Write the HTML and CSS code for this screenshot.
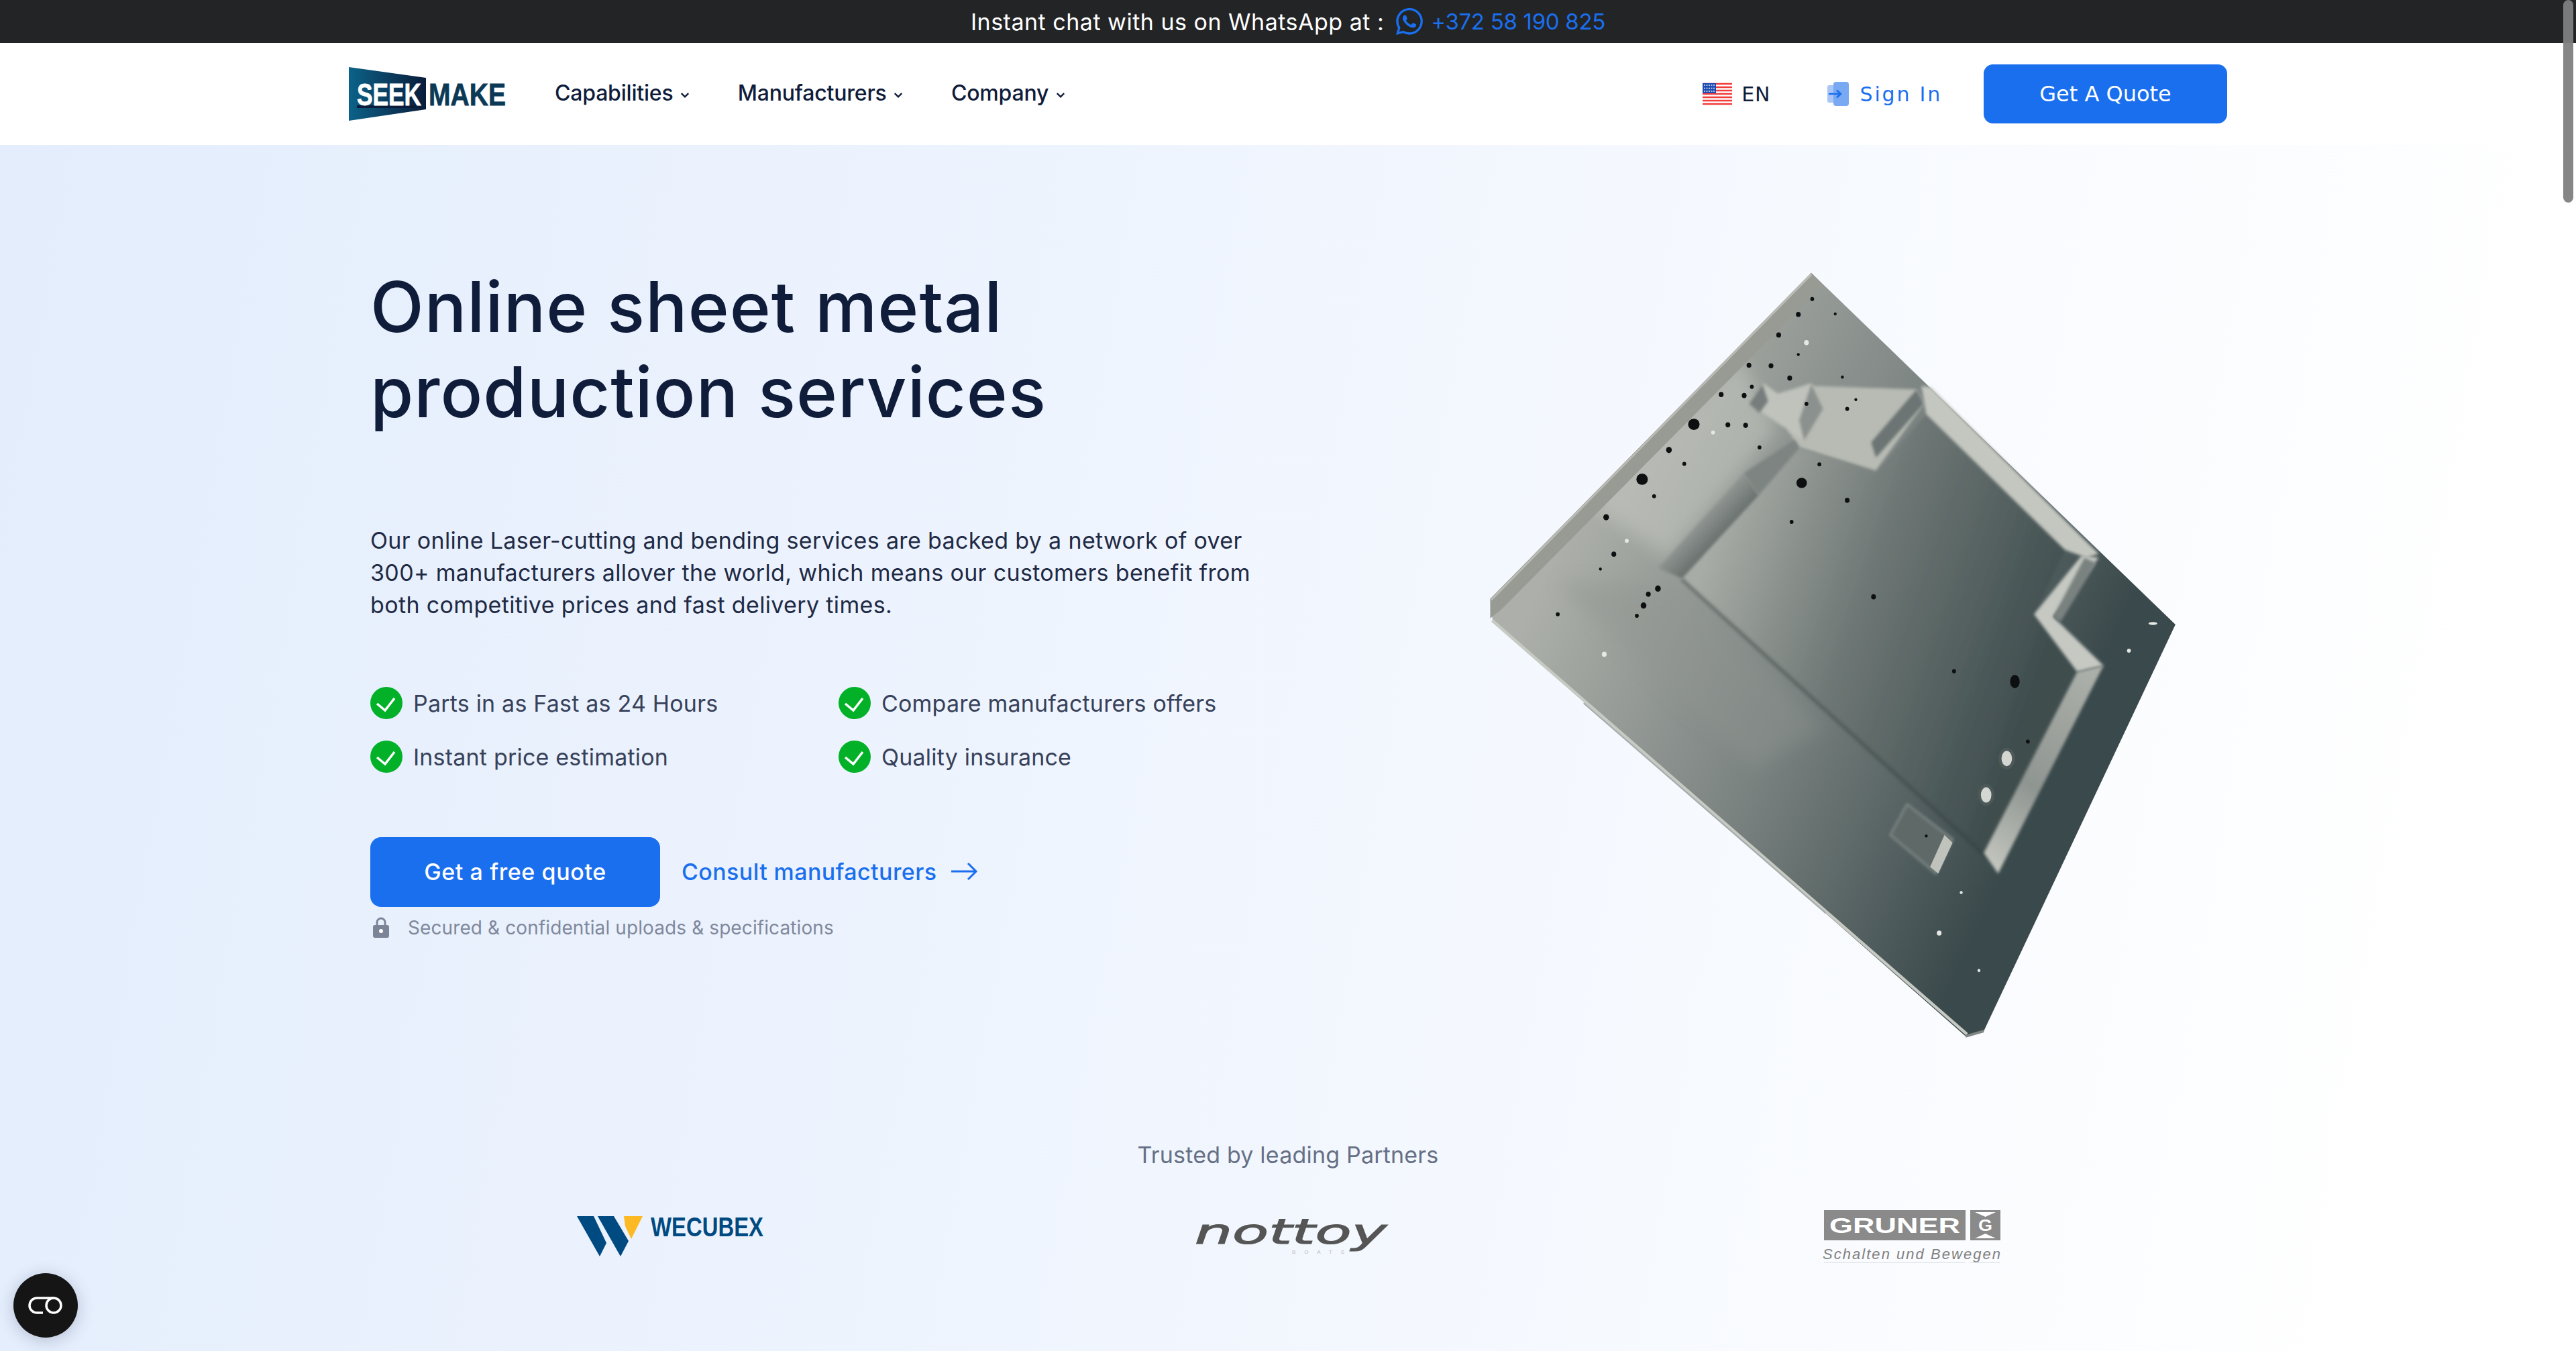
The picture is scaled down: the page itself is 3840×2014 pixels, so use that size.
FILE: index.html
```html
<!DOCTYPE html>
<html lang="en">
<head>
  <meta charset="UTF-8" />
  <meta name="viewport" content="width=device-width, initial-scale=1.0" />
  <title>SeekMake</title>
  <link rel="stylesheet" href="styles.css">
</head>
<body>
  <div class="topbar">
    <span class="topbar-label">Instant chat with us on WhatsApp at :</span>
    <svg class="wa-icon" viewBox="0 0 24 24"><path fill="#1a6fef" d="M17.472 14.382c-.297-.149-1.758-.867-2.03-.967-.273-.099-.471-.148-.67.15-.197.297-.767.966-.94 1.164-.173.199-.347.223-.644.075-.297-.15-1.255-.463-2.39-1.475-.883-.788-1.48-1.761-1.653-2.059-.173-.297-.018-.458.13-.606.134-.133.298-.347.446-.52.149-.174.198-.298.298-.497.099-.198.05-.371-.025-.52-.075-.149-.669-1.612-.916-2.207-.242-.579-.487-.5-.669-.51-.173-.008-.371-.01-.57-.01-.198 0-.52.074-.792.372-.272.297-1.04 1.016-1.04 2.479 0 1.462 1.065 2.875 1.213 3.074.149.198 2.096 3.2 5.077 4.487.709.306 1.262.489 1.694.625.712.227 1.36.195 1.871.118.571-.085 1.758-.719 2.006-1.413.248-.694.248-1.289.173-1.413-.074-.124-.272-.198-.57-.347m-5.421 7.403h-.004a9.87 9.87 0 01-5.031-1.378l-.361-.214-3.741.982.998-3.648-.235-.374a9.86 9.86 0 01-1.51-5.26c.001-5.45 4.436-9.884 9.888-9.884 2.64 0 5.122 1.03 6.988 2.898a9.825 9.825 0 012.893 6.994c-.003 5.45-4.437 9.884-9.885 9.884m8.413-18.297A11.815 11.815 0 0012.05 0C5.495 0 .16 5.335.157 11.892c0 2.096.547 4.142 1.588 5.945L.057 24l6.305-1.654a11.882 11.882 0 005.683 1.448h.005c6.554 0 11.89-5.335 11.893-11.893a11.821 11.821 0 00-3.48-8.413z"/></svg>
    <a class="wa-number" href="#">+372 58 190 825</a>
  </div>

  <header class="header">
    <div class="header-inner">
      <svg class="logo" viewBox="0 0 234 80">
        <defs>
          <linearGradient id="logo-bg" x1="0" x2="1" y1="0" y2="0">
            <stop offset="0" stop-color="#0b6288"/>
            <stop offset="1" stop-color="#0a1c3a"/>
          </linearGradient>
        </defs>
        <polygon points="0,0 115,16 115,63 0,80" fill="url(#logo-bg)"/>
        <rect x="12" y="57" width="96" height="4" fill="#0a1c3a"/>
        <text x="12" y="57" class="logo-text" fill="#ffffff" stroke="#ffffff" textLength="96" lengthAdjust="spacingAndGlyphs">SEEK</text>
        <text x="119" y="57" class="logo-text" fill="#0c3a56" stroke="#0c3a56" textLength="115" lengthAdjust="spacingAndGlyphs">MAKE</text>
      </svg>
      <nav class="nav">
        <a href="#">Capabilities <svg class="chev" viewBox="0 0 12 8"><path d="M1.5 1.5 6 6l4.5-4.500"/></svg></a>
        <a href="#">Manufacturers <svg class="chev" viewBox="0 0 12 8"><path d="M1.5 1.5 6 6l4.5-4.500"/></svg></a>
        <a href="#">Company <svg class="chev" viewBox="0 0 12 8"><path d="M1.5 1.5 6 6l4.5-4.500"/></svg></a>
      </nav>
      <div class="lang">
        <svg class="flag" viewBox="0 0 44 32">
          <rect width="44" height="32" rx="4" fill="#fff"/>
          <path d="M0 1h44M0 6h44M0 11h44M0 16h44M0 21h44M0 26h44M0 31h44" stroke="#f23b3b" stroke-width="2.6"/>
          <rect width="20" height="15" fill="#1e4bb0"/>
          <path d="M2 3h16M2 7.5h16M2 12h16" stroke="#dfe6f7" stroke-width="1.6" stroke-dasharray="2 1.5"/>
        </svg>
        <span>EN</span>
      </div>
      <a class="signin" href="#">
        <svg class="signin-icon" viewBox="0 0 32 36">
          <rect x="0" y="5" width="22" height="26" rx="3" fill="#a9c6f7"/>
          <rect x="9" y="0" width="23" height="36" rx="4" fill="#7aa9f4"/>
          <path d="M2 18h18M14 12.5l6 5.500-6 5.500" fill="none" stroke="#1a6fef" stroke-width="2.6"/>
        </svg>
        Sign In
      </a>
      <a class="quote-btn" href="#">Get A Quote</a>
    </div>
  </header>

  <main class="hero">
    <div class="hero-inner">
      <section class="hero-copy">
        <h1>Online sheet metal<br>production services</h1>
        <p class="lead">Our online Laser-cutting and bending services are backed by a network of over<br>300+ manufacturers allover the world, which means our customers benefit from<br>both competitive prices and fast delivery times.</p>
        <ul class="features">
          <li><svg class="check" viewBox="0 0 48 48"><circle cx="24" cy="24" r="24"/><path d="M10 25l12 10L36 17"/></svg>Parts in as Fast as 24 Hours</li>
          <li><svg class="check" viewBox="0 0 48 48"><circle cx="24" cy="24" r="24"/><path d="M10 25l12 10L36 17"/></svg>Compare manufacturers offers</li>
          <li><svg class="check" viewBox="0 0 48 48"><circle cx="24" cy="24" r="24"/><path d="M10 25l12 10L36 17"/></svg>Instant price estimation</li>
          <li><svg class="check" viewBox="0 0 48 48"><circle cx="24" cy="24" r="24"/><path d="M10 25l12 10L36 17"/></svg>Quality insurance</li>
        </ul>
        <div class="actions">
          <a class="free-btn" href="#">Get a free quote</a>
          <a class="consult" href="#">Consult manufacturers
            <svg class="arrow" viewBox="0 0 40 26"><path d="M1 13h37M26 1l12 12-12 12"/></svg>
          </a>
        </div>
        <p class="secure">
          <svg class="lock" viewBox="0 0 24 30"><path d="M6 12V7a6 6 0 0112 0v5" fill="none" stroke="#7c8598" stroke-width="3"/><rect y="11" width="24" height="19" rx="3" fill="#7c8598"/><circle cx="12" cy="20" r="3" fill="#fff"/></svg>
          Secured &amp; confidential uploads &amp; specifications
        </p>
      </section>

      <svg class="part" viewBox="0 0 1568 1568" preserveAspectRatio="none">
        <defs>
          <linearGradient id="sheet" gradientUnits="userSpaceOnUse" x1="300" y1="450" x2="1300" y2="950">
            <stop offset="0" stop-color="#adb0aa"/>
            <stop offset="0.5" stop-color="#7b8381"/>
            <stop offset="1" stop-color="#3a494b"/>
          </linearGradient>
          <linearGradient id="floor" gradientUnits="userSpaceOnUse" x1="560" y1="560" x2="1250" y2="820">
            <stop offset="0" stop-color="#a8aca6"/>
            <stop offset="0.45" stop-color="#6e7775"/>
            <stop offset="1" stop-color="#3f4d4e"/>
          </linearGradient>
          <linearGradient id="ridge" gradientUnits="userSpaceOnUse" x1="1380" y1="800" x2="1140" y2="1200">
            <stop offset="0" stop-color="#aeb2ac"/>
            <stop offset="0.6" stop-color="#8f9591"/>
            <stop offset="1" stop-color="#c6c9c1"/>
          </linearGradient>
          <linearGradient id="wall" gradientUnits="userSpaceOnUse" x1="455" y1="560" x2="510" y2="615">
            <stop offset="0" stop-color="#a6aaa5"/>
            <stop offset="1" stop-color="#6b7371"/>
          </linearGradient>
          <filter id="soft" x="-10%" y="-10%" width="120%" height="120%"><feGaussianBlur stdDeviation="3"/></filter>
          <filter id="softer" x="-30%" y="-30%" width="160%" height="160%"><feGaussianBlur stdDeviation="18"/></filter>
          <clipPath id="sheet-clip"><polygon points="770,35 800,62 1530,720 1130,1512 1092,1522 105,712 100,670"/></clipPath>
        </defs>
        <!-- sheet body -->
        <polygon points="770,35 800,62 1530,720 1130,1512 1092,1522 105,712 100,670" fill="url(#sheet)"/>
        <g clip-path="url(#sheet-clip)">
          <polygon points="300,480 620,200 700,340 470,590" fill="#cfd1ca" opacity="0.45" filter="url(#softer)"/>
          <polygon points="240,640 480,640 800,920 650,1000" fill="#8f9490" opacity="0.4" filter="url(#softer)"/>
        </g>
        <!-- flange along the top left -->
        <polygon points="770,35 795,58 122,692 100,708 100,670" fill="#989b93"/>
        <path d="M770 38 102 672" stroke="#b9bbb4" stroke-width="4" fill="none"/>
        <path d="M104 712 1095 1518" stroke="#c7cac3" stroke-width="6" fill="none"/>
        <path d="M295 873 800 1282" stroke="#a4abaa" stroke-width="3" fill="none"/>
        <path d="M1092 1522 1130 1512" stroke="#7f8684" stroke-width="5" fill="none"/>
        <!-- raised area round the notch -->
        <polygon points="770,255 990,262 1005,290 905,420 745,375 720,340 790,300" fill="#b8bbb4" filter="url(#soft)"/>
        <!-- floor -->
        <polygon points="500,630 660,465 745,375 905,425 1010,310 1300,575 1235,700 1320,810 1135,1170" fill="url(#floor)" filter="url(#soft)"/>
        <path d="M500 632 1135 1172" stroke="#2d3938" stroke-width="8" fill="none" opacity="0.35" filter="url(#soft)"/>
        <!-- left wall -->
        <polygon points="450,610 630,425 660,468 500,630" fill="url(#wall)" filter="url(#soft)"/>
        <polygon points="630,425 735,360 745,375 660,468" fill="#7d8481" filter="url(#soft)"/>
        <!-- block in the notch -->
        <polygon points="640,290 670,250 700,270 730,262 770,250 795,300 755,362 675,312" fill="#c0c3bc" filter="url(#soft)"/>
        <polygon points="640,290 668,252 680,285 662,308" fill="#767d7b" filter="url(#soft)"/>
        <polygon points="770,252 795,300 755,362 745,322" fill="#8b918e" filter="url(#soft)"/>
        <polygon points="895,365 990,262 1005,290 905,395" fill="#6c7573" filter="url(#soft)"/>
        <!-- ridge on the right -->
        <polygon points="1000,255 1020,258 1370,582 1345,590 1300,575 1010,310" fill="#c4c7c0" filter="url(#soft)"/>
        <polygon points="1235,700 1335,585 1370,590 1275,705 1380,800 1325,812" fill="#c6c9c2" filter="url(#soft)"/>
        <polygon points="1275,705 1340,590 1365,600 1290,715" fill="#7a8280" filter="url(#soft)"/>
        <polygon points="1325,812 1380,800 1160,1205 1130,1165" fill="url(#ridge)" filter="url(#soft)"/>
        <!-- tab at the bottom -->
        <polygon points="970,1070 1065,1138 1030,1205 935,1130" fill="#5e6968" stroke="#7f8886" stroke-width="4" filter="url(#soft)"/>
        <polygon points="1048,1130 1065,1145 1035,1205 1018,1192" fill="#c0c3bc"/>
        <!-- holes -->
        <g fill="#0d0f10">
          <ellipse cx="525" cy="330" rx="12" ry="11"/>
          <ellipse cx="417" cy="437" rx="12" ry="11"/>
          <ellipse cx="750" cy="444" rx="11" ry="10"/>
          <ellipse cx="1195" cy="831" rx="10" ry="13"/>
          <circle cx="772" cy="86" r="4"/><circle cx="743" cy="116" r="5"/><circle cx="820" cy="115" r="3"/>
          <circle cx="702" cy="156" r="5"/><circle cx="743" cy="194" r="3"/><circle cx="640" cy="215" r="5"/>
          <circle cx="686" cy="216" r="5"/><circle cx="725" cy="240" r="5"/><circle cx="646" cy="257" r="4"/>
          <circle cx="582" cy="272" r="5"/><circle cx="630" cy="274" r="5"/><circle cx="596" cy="331" r="5"/>
          <circle cx="633" cy="332" r="5"/><circle cx="662" cy="375" r="4"/><circle cx="473" cy="380" r="6"/>
          <circle cx="505" cy="407" r="4"/><circle cx="760" cy="290" r="4"/><circle cx="845" cy="300" r="4"/>
          <circle cx="863" cy="282" r="3"/><circle cx="835" cy="238" r="3"/><circle cx="787" cy="408" r="4"/>
          <circle cx="845" cy="478" r="5"/><circle cx="729" cy="520" r="4"/><circle cx="342" cy="511" r="6"/>
          <circle cx="442" cy="470" r="4"/><circle cx="358" cy="583" r="5"/><circle cx="330" cy="612" r="3"/>
          <circle cx="450" cy="650" r="6"/><circle cx="430" cy="661" r="5"/><circle cx="420" cy="683" r="6"/>
          <circle cx="406" cy="703" r="4"/><circle cx="241" cy="700" r="4"/><circle cx="900" cy="666" r="5"/>
          <circle cx="1068" cy="811" r="4"/><circle cx="1222" cy="948" r="4"/><circle cx="1010" cy="1132" r="3"/>
        </g>
        <g fill="#e6e8e3">
          <circle cx="760" cy="171" r="5"/><circle cx="565" cy="346" r="4"/><circle cx="385" cy="557" r="4"/>
          <circle cx="338" cy="778" r="5"/><circle cx="1433" cy="771" r="4"/><circle cx="1037" cy="1321" r="5"/>
          <circle cx="1083" cy="1242" r="3"/><circle cx="1120" cy="1394" r="3"/><ellipse cx="1483" cy="718" rx="9" ry="3"/>
        </g>
        <g fill="#d4d7d1" stroke="#4d5858" stroke-width="6">
          <ellipse cx="1178" cy="981" rx="14" ry="18"/>
          <ellipse cx="1135" cy="1052" rx="14" ry="18"/>
        </g>
      </svg>
    </div>

    <section class="partners">
      <p class="partners-title">Trusted by leading Partners</p>
      <div class="partner-row">
        <svg class="logo-wecubex" viewBox="0 0 279 60">
          <polygon points="0,0 25,0 44,40 34,60" fill="#004a82"/>
          <polygon points="31,0 55,0 77,37 65,60" fill="#004a82"/>
          <polygon points="70,0 98,0 81,34 72,15" fill="#fdb924"/>
          <text x="110" y="30" class="wecubex-text" textLength="168" lengthAdjust="spacingAndGlyphs">WECUBEX</text>
        </svg>
        <svg class="logo-nottoy" viewBox="0 0 286 54">
          <text x="0" y="38" class="nottoy-text" textLength="286" lengthAdjust="spacingAndGlyphs">nottoy</text>
          <text x="145" y="53" class="nottoy-sub" textLength="78">BOATS</text>
        </svg>
        <svg class="logo-gruner" viewBox="0 0 265 79">
          <rect x="2" y="0" width="211" height="45" fill="#8a8a8a"/>
          <rect x="220" y="0" width="45" height="45" fill="#8a8a8a"/>
          <text x="10" y="34" class="gruner-text" textLength="195" lengthAdjust="spacingAndGlyphs">GRUNER</text>
          <text x="232" y="31" class="gruner-g" textLength="21" lengthAdjust="spacingAndGlyphs">G</text>
          <path d="M227 3h31l-15.500 7zM227 42h31l-15.500-7z" fill="#fff"/>
          <text x="0" y="73" class="gruner-sub" textLength="265">Schalten und Bewegen</text>
          <path d="M2 78h211M220 78h45" stroke="#d6d9de" stroke-width="1"/>
        </svg>
      </div>
    </section>
  </main>

  <!-- floating bits that sit over the page -->
  <div class="float-btn">
    <svg viewBox="0 0 96 96"><path d="M60 37H35a11 11 0 000 22h9"/><circle cx="60" cy="48" r="11"/></svg>
  </div>
  <div class="scroll-thumb"></div>
</body>
</html>
```

FILE: styles.css
```css
html, body {
  margin: 0;
  padding: 0;
  height: 100%;
  overflow: hidden;
}
body {
  font-family: 'Inter', sans-serif;
  color: #0f1c3a;
  background: #fff;
}
a {
  text-decoration: none;
  color: inherit;
}
svg {
  overflow: visible;
}
.topbar {
  height: 64px;
  background-color: #232426;
  color: #fff;
  display: flex;
  align-items: center;
  justify-content: center;
  font-size: 33px;
}
.topbar-label {
  font-size: 34px;
  letter-spacing: 0.5px;
}
.wa-icon {
  width: 40px;
  height: 40px;
  margin: 0 12px 0 18px;
}
.wa-number {
  color: #1a6fef;
  letter-spacing: -0.3px;
}
.header {
  height: 152px;
  background: #fff;
}
.header-inner {
  width: 2800px;
  height: 100%;
  margin: auto;
  display: flex;
  align-items: center;
}
.logo {
  width: 234px;
  height: 80px;
  margin-right: 73px;
}
.logo-text {
  font-family: 'Liberation Sans', sans-serif;
  font-weight: bold;
  font-size: 47px;
  stroke-width: 0.8;
}
.nav {
  display: flex;
  gap: 72px;
  padding-bottom: 3px;
  font-size: 32px;
  font-weight: 500;
  letter-spacing: -0.2px;
}
.chev {
  width: 14px;
  height: 10px;
  margin-left: 2px;
  vertical-align: 3px;
  fill: none;
  stroke: #0f1c3a;
  stroke-width: 2;
}
.lang {
  display: flex;
  align-items: center;
  gap: 14px;
  margin-left: auto;
  font-family: 'DejaVu Sans', sans-serif;
  font-size: 30px;
  letter-spacing: 1px;
}
.flag {
  width: 44px;
  height: 32px;
}
.signin {
  display: flex;
  align-items: center;
  gap: 17px;
  margin: 0 62px 0 84px;
  font-family: 'DejaVu Sans', sans-serif;
  font-size: 30px;
  letter-spacing: 2.8px;
  color: #1a6fef;
}
.signin-icon {
  width: 32px;
  height: 36px;
}
.quote-btn {
  width: 363px;
  height: 88px;
  border-radius: 14px;
  background-color: #1a6fef;
  color: #fff;
  display: flex;
  align-items: center;
  justify-content: center;
  font-family: 'DejaVu Sans', sans-serif;
  font-size: 32px;
}
.hero {
  height: 1798px;
  background: linear-gradient(100deg, #e3edfc 0%, #eef4fe 40%, #ffffff 92%);
}
.hero-inner {
  width: 2800px;
  margin: auto;
  padding-top: 164px;
  display: flex;
}
.hero-copy {
  width: 1598px;
  padding: 14px 0 0 32px;
}
h1 {
  margin: 0;
  font-size: 104px;
  line-height: 127px;
  font-weight: 500;
  letter-spacing: 1px;
  color: #0f1c3a;
}
.lead {
  margin: 134px 0 0;
  font-size: 34px;
  line-height: 48px;
  letter-spacing: 0.35px;
  color: #1f2a44;
}
.features {
  list-style: none;
  margin: 98px 0 0;
  padding: 0;
  display: grid;
  grid-template-columns: 698px 1fr;
  row-gap: 32px;
  font-size: 34px;
  letter-spacing: 0.2px;
  color: #374159;
}
.features li {
  display: flex;
  align-items: center;
  gap: 16px;
  height: 48px;
}
.check {
  width: 48px;
  height: 48px;
}
.check circle {
  fill: #02b128;
}
.check path {
  fill: none;
  stroke: #fff;
  stroke-width: 3.5;
}
.actions {
  margin-top: 96px;
  display: flex;
  align-items: center;
  gap: 32px;
}
.free-btn {
  width: 432px;
  height: 104px;
  padding-bottom: 2px;
  box-sizing: border-box;
  border-radius: 16px;
  background-color: #1a6fef;
  color: #fff;
  display: flex;
  align-items: center;
  justify-content: center;
  font-size: 34px;
  font-weight: 500;
  letter-spacing: 0.6px;
}
.consult {
  display: flex;
  align-items: center;
  gap: 21px;
  padding-bottom: 2px;
  font-size: 34px;
  font-weight: 500;
  letter-spacing: 0.4px;
  color: #1a6fef;
}
.arrow {
  width: 40px;
  height: 26px;
  fill: none;
  stroke: #1a6fef;
  stroke-width: 3;
}
.secure {
  margin: 16px 0 0 4px;
  display: flex;
  align-items: center;
  gap: 28px;
  font-size: 28px;
  line-height: 30px;
  letter-spacing: 0.1px;
  color: #7f889c;
}
.lock {
  width: 24px;
  height: 30px;
}
.part {
  width: 1120px;
  height: 1200px;
  flex: none;
}
.partners {
  margin-top: 118px;
  text-align: center;
}
.partners-title {
  margin: 0;
  font-size: 34px;
  line-height: 48px;
  letter-spacing: 0.2px;
  color: #667085;
}
.partner-row {
  margin-top: 57px;
  padding-left: 8px;
  height: 80px;
  display: grid;
  grid-template-columns: repeat(3, 925px);
  justify-content: center;
  justify-items: center;
  align-items: center;
}
.logo-wecubex {
  width: 279px;
  height: 60px;
}
.logo-nottoy {
  width: 286px;
  height: 54px;
}
.logo-gruner {
  width: 265px;
  height: 79px;
}
.wecubex-text {
  font-family: 'Liberation Sans', sans-serif;
  font-weight: bold;
  font-size: 40px;
  fill: #004a82;
}
.nottoy-text {
  font-family: 'DejaVu Sans', sans-serif;
  font-style: italic;
  font-size: 52px;
  fill: #555;
  stroke: #555;
  stroke-width: 1.2;
}
.nottoy-sub {
  font-family: 'Liberation Sans', sans-serif;
  font-size: 8px;
  fill: #bbb;
}
.gruner-text {
  font-family: 'Liberation Sans', sans-serif;
  font-weight: bold;
  font-size: 31px;
  fill: #fff;
}
.gruner-g {
  font-family: 'Liberation Sans', sans-serif;
  font-weight: bold;
  font-size: 24px;
  fill: #fff;
}
.gruner-sub {
  font-family: 'Liberation Sans', sans-serif;
  font-style: italic;
  font-size: 22px;
  fill: #808080;
}
.float-btn {
  position: fixed;
  left: 20px;
  bottom: 20px;
  width: 96px;
  height: 96px;
  border-radius: 50%;
  background-color: #151515;
  box-shadow: 0 4px 24px rgba(30, 50, 90, 0.25);
}
.float-btn svg {
  display: block;
  fill: none;
  stroke: #fff;
  stroke-width: 3.5;
}
.scroll-thumb {
  position: fixed;
  top: 0;
  right: 4px;
  width: 15px;
  height: 302px;
  border-radius: 8px;
  background-color: rgba(128, 128, 128, 0.95);
}
```
